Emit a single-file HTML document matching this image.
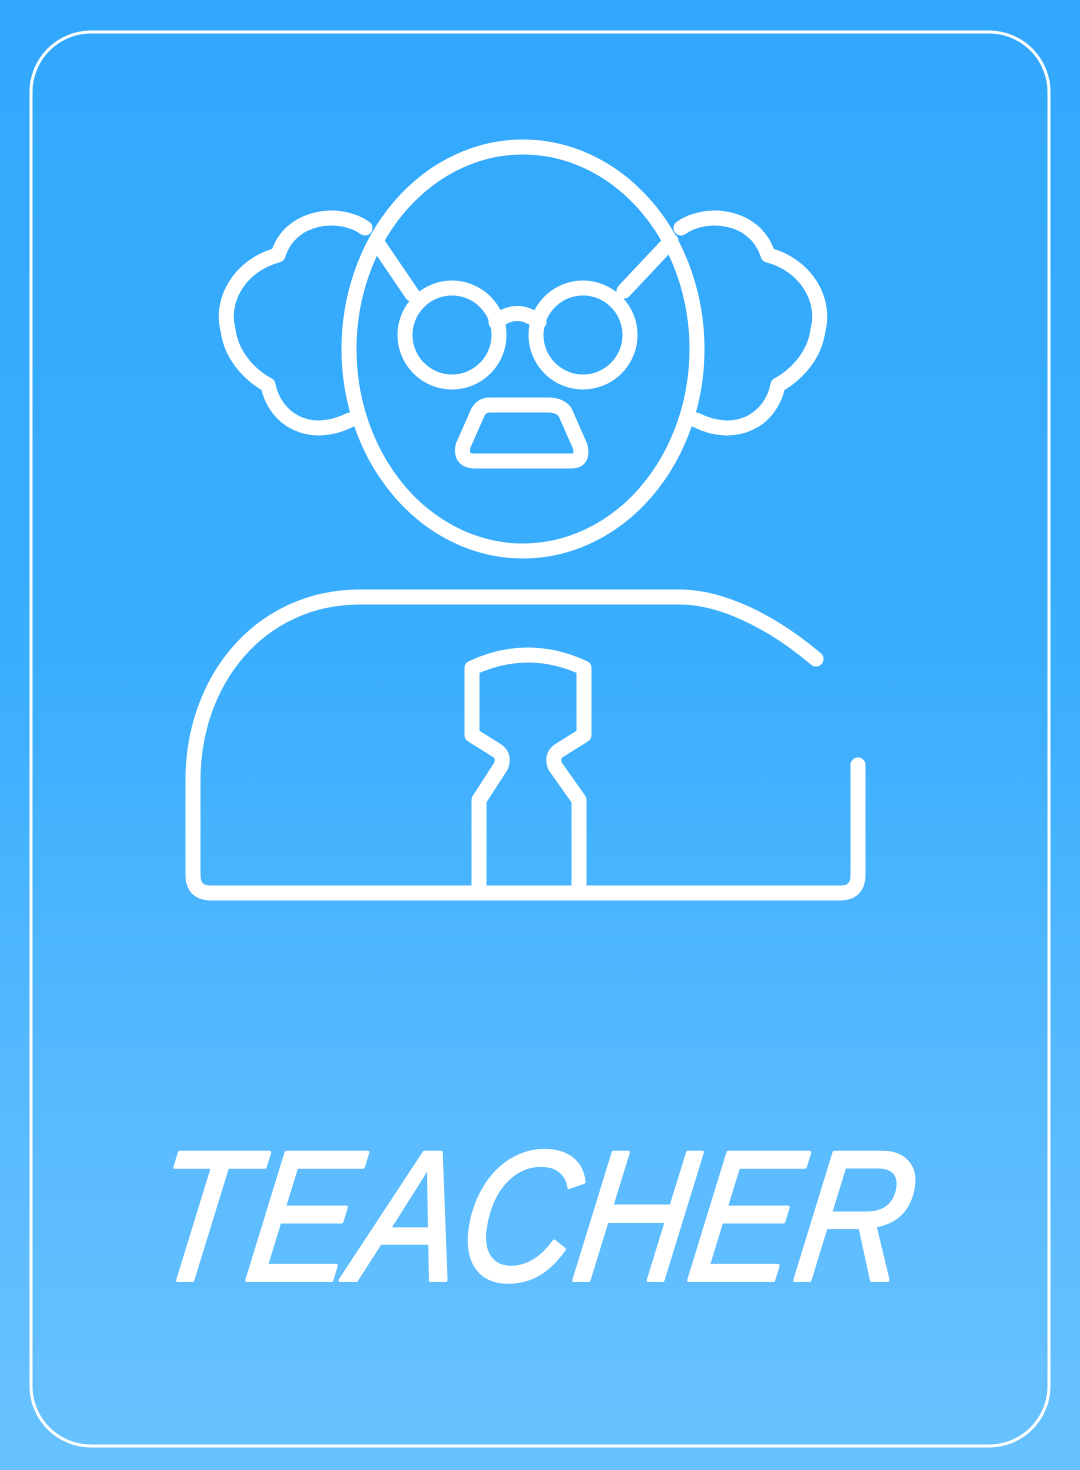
<!DOCTYPE html>
<html><head><meta charset="utf-8"><style>
html,body{margin:0;padding:0;width:1080px;height:1470px;overflow:hidden}
body{background:linear-gradient(180deg,#32a8fd 0%,#3aaefd 45%,#5cbcff 80%,#68c2ff 100%)}
svg{position:absolute;left:0;top:0}
</style></head><body>
<svg width="1080" height="1470" viewBox="0 0 1080 1470">
<rect x="31" y="32" width="1018" height="1414" rx="60" fill="none" stroke="#fff" stroke-width="3"/>
<g fill="none" stroke="#fff" stroke-width="15" stroke-linecap="round" stroke-linejoin="round">
<ellipse cx="523" cy="349" rx="174" ry="202"/>
<circle cx="452" cy="335" r="47"/>
<circle cx="583" cy="335" r="47"/>
<path d="M496,322 Q517,305 539,322"/>
<path d="M412,294 L376,241"/>
<path d="M624,291 L671,241"/>
<path d="M365,228 C340,210 290,215 278,255 C240,265 220,300 228,330 C232,360 255,378 268,385 C275,420 310,440 350,420"/>
<path d="M681,228 C706,210 756,215 768,255 C806,265 826,300 818,330 C814,360 791,378 778,385 C771,420 736,440 696,420"/>
<path d="M478,412 L463,446 Q460,461 475,461 L571,461 Q584,461 580,446 L565,412 Q560,405 548,405 L490,405 Q482,405 478,412Z"/>
<path d="M816,659 C770,620 720,597 680,597 L360,597 C260,597 193,680 193,780 L193,875 Q193,893 211,893 L840,893 Q858,893 858,875 L858,765"/>
<path d="M479,890 L479,800 L501,766 Q505,755 496,750 L472,735 L472,668 Q528,642 584,668 L584,735 L560,750 Q551,755 555,766 L579,800 L579,890"/>
</g>
<g transform="translate(0,1280) skewX(-8) translate(0,-1280)">
<text x="145" y="1280" font-family="Liberation Sans, sans-serif" font-style="italic" font-size="185" fill="#fff" stroke="#fff" stroke-width="4" stroke-linejoin="round" textLength="760" lengthAdjust="spacingAndGlyphs">TEACHER</text>
</g>
</svg>
</body></html>
